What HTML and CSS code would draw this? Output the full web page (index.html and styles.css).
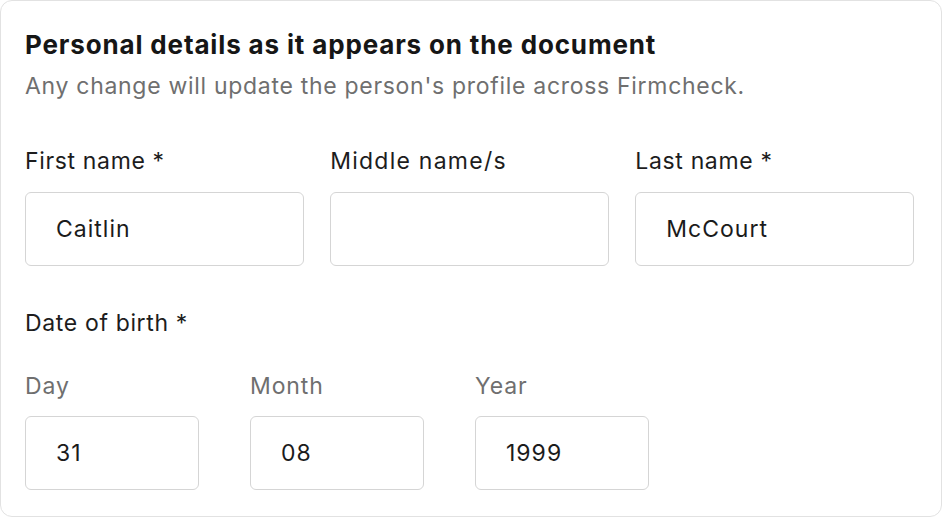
FILE: index.html
```html
<!DOCTYPE html>
<html lang="en">
<head>
<meta charset="utf-8">
<title>Personal details</title>
<link rel="stylesheet" href="styles.css">
</head>
<body>
<section class="card">
  <header class="head">
    <h2 class="title">Personal details as it appears on the document</h2>
    <p class="subtitle">Any change will update the person's profile across Firmcheck.</p>
  </header>
  <div class="names">
    <label class="field">
      <span class="label">First name *</span>
      <span class="input">Caitlin</span>
    </label>
    <label class="field">
      <span class="label label-wide">Middle name/s</span>
      <span class="input"></span>
    </label>
    <label class="field">
      <span class="label">Last name *</span>
      <span class="input">McCourt</span>
    </label>
  </div>
  <div class="dob">
    <div class="label">Date of birth *</div>
    <div class="dob-row">
      <label class="field">
        <span class="sublabel">Day</span>
        <span class="input">31</span>
      </label>
      <label class="field">
        <span class="sublabel">Month</span>
        <span class="input">08</span>
      </label>
      <label class="field">
        <span class="sublabel">Year</span>
        <span class="input">1999</span>
      </label>
    </div>
  </div>
</section>
</body>
</html>
```
FILE: styles.css
```css
* { box-sizing: border-box; }
html, body { margin: 0; padding: 0; background: #ffffff; }
body {
  font-family: Inter, "Noto Sans", "Liberation Sans", sans-serif;
  color: #1b1b1b;
}
.card {
  width: 942px;
  height: 517px;
  border: 1px solid #e2e2e2;
  border-radius: 12px;
  padding: 28px 27px 0 24px;
  display: flex;
  flex-direction: column;
}
.title {
  margin: 0;
  font-size: 26px;
  line-height: 32px;
  font-weight: 700;
  letter-spacing: 0.85px;
  color: #161616;
}
.subtitle {
  margin: 10px 0 0;
  font-size: 23px;
  line-height: 30px;
  color: #6f6f6f;
  letter-spacing: 0.7px;
}
.names {
  margin-top: 45px;
  display: grid;
  grid-template-columns: repeat(3, 1fr);
  column-gap: 26.5px;
}
.field {
  display: flex;
  flex-direction: column;
}
.label {
  font-size: 23px;
  line-height: 30px;
  color: #1d1d1d;
  letter-spacing: 0.65px;
}
.label-wide {
  letter-spacing: 1.25px;
}
.sublabel {
  font-size: 23px;
  line-height: 30px;
  color: #6f6f6f;
  letter-spacing: 0.9px;
}
.input {
  margin-top: 16px;
  height: 74px;
  border: 1px solid #d5d5d5;
  border-radius: 6px;
  padding: 0 30px;
  display: flex;
  align-items: center;
  font-size: 23px;
  color: #1b1b1b;
  letter-spacing: 1px;
}
.dob {
  margin-top: 42px;
}
.dob-row {
  margin-top: 33px;
  display: grid;
  grid-template-columns: repeat(3, 174px);
  column-gap: 51px;
}
.dob-row .input {
  margin-top: 15px;
}
```
